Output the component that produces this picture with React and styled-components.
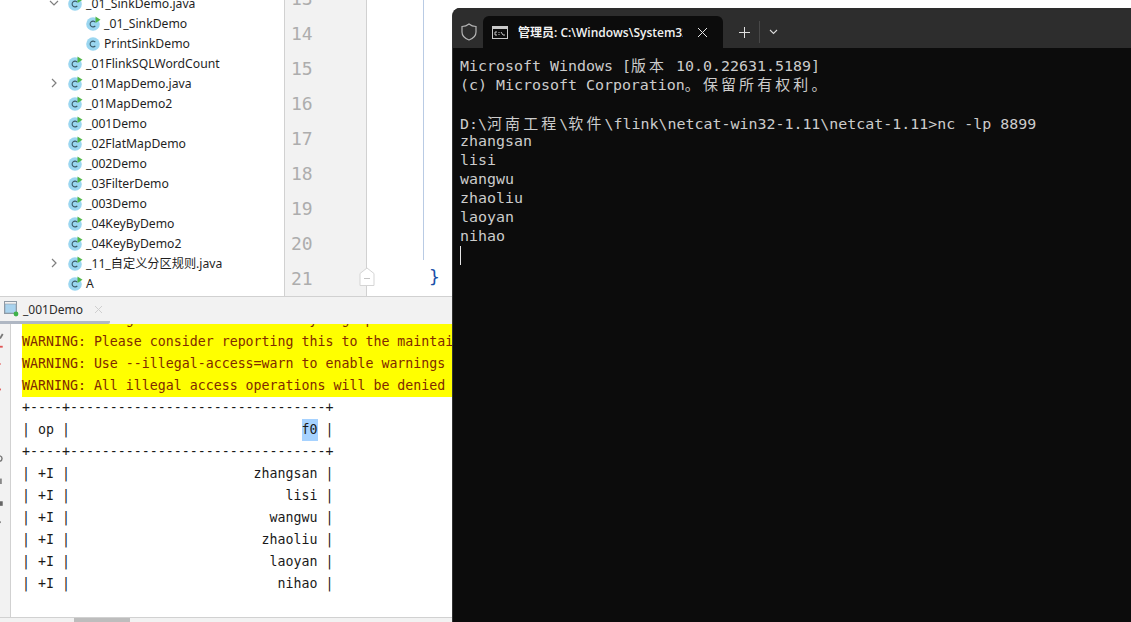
import React from "react";
import styled, { createGlobalStyle } from "styled-components";

const GlobalStyle = createGlobalStyle`
  html, body {
    margin: 0;
    padding: 0;
    background: #fff;
    overflow: hidden;
  }
`;

const Page = styled.div`
  display: flex;
  width: 1131px;
  height: 622px;
  overflow: hidden;
  background: #fff;
`;

const Ide = styled.div`
  width: 452px;
  flex-shrink: 0;
  display: flex;
  flex-direction: column;
  overflow: hidden;
`;

/* ---- top half: project tree + editor ---- */
const TopPane = styled.div`
  height: 296px;
  flex-shrink: 0;
  display: flex;
  overflow: hidden;
`;

const Tree = styled.div`
  width: 284px;
  flex-shrink: 0;
  display: flex;
  flex-direction: column;
  justify-content: flex-end;
  padding-bottom: 3px;
  box-sizing: border-box;
  overflow: hidden;
  font-family: "Noto Sans", "Noto Sans CJK SC", sans-serif;
  font-size: 12.2px;
  color: #1f1f1f;
`;

const TreeRow = styled.div`
  height: 20px;
  flex-shrink: 0;
  display: flex;
  align-items: center;
  padding-left: ${(p) => (p.$nested ? 86 : 68)}px;
  position: relative;
`;

const Chevron = styled.svg`
  position: absolute;
  left: 49px;
  top: 5px;
`;

const TreeLabel = styled.span`
  margin-left: 3px;
  white-space: pre;
`;

const Gutter = styled.div`
  width: 83px;
  flex-shrink: 0;
  box-sizing: border-box;
  background: #f2f2f2;
  border-left: 1px solid #d1d1d1;
  border-right: 1px solid #d1d1d1;
  display: flex;
  flex-direction: column;
  justify-content: flex-end;
  overflow: hidden;
`;

const LineNo = styled.div`
  height: 35px;
  flex-shrink: 0;
  line-height: 35px;
  padding-left: 6px;
  font-family: "DejaVu Sans Mono", monospace;
  font-size: 18px;
  color: #adadad;
`;

const FoldMark = styled.svg`
  position: absolute;
  left: -8px;
  bottom: 9px;
`;

const Editor = styled.div`
  flex: 1;
  display: flex;
  position: relative;
`;

const IndentGuide = styled.div`
  width: 1px;
  height: 260px;
  margin-left: 56px;
  background: #b9cbe4;
`;

const Brace = styled.div`
  margin: 259px 0 0 5px;
  font-family: "DejaVu Sans Mono", monospace;
  font-size: 18px;
  line-height: 35px;
  color: #1a4fa8;
`;

/* ---- bottom half: run console ---- */
const BottomPane = styled.div`
  flex: 1;
  display: flex;
  flex-direction: column;
  min-height: 0;
  border-top: 1px solid #d1d1d1;
`;

const TabBar = styled.div`
  height: 27px;
  flex-shrink: 0;
  background: #f2f2f2;
  display: flex;
`;

const RunTab = styled.div`
  width: 110px;
  box-sizing: border-box;
  display: flex;
  align-items: center;
  padding-left: 4px;
  gap: 4px;
  border-bottom: 3px solid #afb7c3;
  border-radius: 0 0 2px 0;
  font-family: "Noto Sans", sans-serif;
  font-size: 12px;
  color: #2b2b2b;
`;

const TabClose = styled.svg`
  margin-left: 7px;
`;

const ConsoleWrap = styled.div`
  flex: 1;
  display: flex;
  min-height: 0;
`;

const ToolStrip = styled.svg`
  width: 11px;
  flex-shrink: 0;
  height: 100%;
  background: #f2f2f2;
  border-right: 1px solid #d1d1d1;
  box-sizing: border-box;
`;

const ConsoleText = styled.div`
  flex: 1;
  min-width: 0;
  padding: 0 0 22px 11px;
  display: flex;
  flex-direction: column;
  justify-content: flex-end;
  overflow: hidden;
  font-family: "DejaVu Sans Mono", monospace;
  font-size: 13.28px;
  line-height: 22px;
  color: #1a1a1a;
`;

const ConsoleLine = styled.div`
  height: 22px;
  flex-shrink: 0;
  white-space: pre;
  ${(p) => p.$warn && "background: #ffff00; color: #7f2a00;"}
`;

const Selected = styled.span`
  background: #a6d2ff;
  display: inline-block;
`;

const ScrollTrack = styled.div`
  height: 5px;
  box-sizing: border-box;
  flex-shrink: 0;
  background: #f2f2f2;
  border-top: 1px solid #d1d1d1;
  padding-left: 74px;
`;

const ScrollThumb = styled.div`
  width: 56px;
  height: 100%;
  background: #bdbdbd;
`;

/* ---- terminal window ---- */
const TerminalArea = styled.div`
  flex: 1;
  min-width: 0;
  padding-top: 8px;
  display: flex;
`;

const Terminal = styled.div`
  flex: 1;
  min-width: 0;
  display: flex;
  flex-direction: column;
  background: #0c0c0c;
  border-left: 1px solid #333;
  border-radius: 8px 0 0 0;
  overflow: hidden;
`;

const TitleBar = styled.div`
  height: 40px;
  flex-shrink: 0;
  background: #2d2d2d;
  display: flex;
  align-items: flex-end;
  padding-left: 8px;
`;

const Shield = styled.svg`
  margin-bottom: 7px;
`;

const TermTab = styled.div`
  width: 240px;
  height: 32px;
  margin-left: 6px;
  box-sizing: border-box;
  background: #0c0c0c;
  border-radius: 6px 6px 0 0;
  display: flex;
  align-items: center;
  padding: 0 15px 0 9px;
  color: #f2f2f2;
`;

const TermTabTitle = styled.span`
  width: 165px;
  margin-left: 10px;
  overflow: hidden;
  white-space: nowrap;
  font-family: "Open Sans", "Noto Sans CJK SC", sans-serif;
  font-size: 12px;
  font-weight: 600;
`;

const TermCloseIcon = styled.svg`
  margin-left: auto;
`;

const TitleActions = styled.div`
  height: 32px;
  display: flex;
  align-items: center;
  padding-left: 16px;
`;

const TitleDivider = styled.div`
  width: 1px;
  height: 22px;
  margin: 0 9px;
  background: #484848;
`;

const TermBody = styled.div`
  flex: 1;
  padding: 7.3px 0 0 7px;
  font-family: "DejaVu Sans Mono", "Noto Sans CJK SC", monospace;
  font-size: 14.95px;
  line-height: 19.1px;
  color: #cccccc;
`;

const TermLine = styled.div`
  height: 19.1px;
  white-space: pre;
`;

const Wide = styled.span`
  font-family: "Noto Sans CJK SC", sans-serif;
  letter-spacing: 3.15px;
`;

const Cursor = styled.div`
  width: 1px;
  height: 19px;
  background: #e6e6e6;
`;

const ClassIcon = ({ run = true }) => (
  <svg width="15" height="15" viewBox="0 0 15 15">
    <circle cx="7" cy="8" r="6.8" fill="#9ad6f0" />
    <path d="M9.3 6.2A2.9 2.9 0 1 0 9.3 9.8" fill="none" stroke="#3a5a68" strokeWidth="1.1" />
    {run && <path d="M9.5 0.5L14.5 3.8L9.5 7Z" fill="#4fb548" />}
  </svg>
);

const treeItems = [
  { label: "_01_SinkDemo.java", run: true, open: true },
  { label: "_01_SinkDemo", run: true, nested: true },
  { label: "PrintSinkDemo", run: false, nested: true },
  { label: "_01FlinkSQLWordCount", run: true },
  { label: "_01MapDemo.java", run: true, closed: true },
  { label: "_01MapDemo2", run: true },
  { label: "_001Demo", run: true },
  { label: "_02FlatMapDemo", run: true },
  { label: "_002Demo", run: true },
  { label: "_03FilterDemo", run: true },
  { label: "_003Demo", run: true },
  { label: "_04KeyByDemo", run: true },
  { label: "_04KeyByDemo2", run: true },
  { label: "_11_自定义分区规则.java", run: true, closed: true },
  { label: "A", run: true },
];

const lineNumbers = [13, 14, 15, 16, 17, 18, 19, 20, 21];

const names = ["zhangsan", "lisi", "wangwu", "zhaoliu", "laoyan", "nihao"];
const divider = "+----+" + "-".repeat(32) + "+";

const warnings = [
  "WARNING: Illegal reflective access by org.apache.flink.api.java.ClosureCleaner",
  "WARNING: Please consider reporting this to the maintainers of org.apache.flink",
  "WARNING: Use --illegal-access=warn to enable warnings of further illegal",
  "WARNING: All illegal access operations will be denied in a future release",
];

export default function App() {
  return (
    <Page>
      <GlobalStyle />
      <Ide>
        <TopPane>
          <Tree>
            {treeItems.map((item) => (
              <TreeRow key={item.label} $nested={item.nested}>
                {item.open && (
                  <Chevron width="10" height="10" viewBox="0 0 10 10">
                    <path d="M1 3L5 7L9 3" fill="none" stroke="#7f7f7f" strokeWidth="1.2" />
                  </Chevron>
                )}
                {item.closed && (
                  <Chevron width="10" height="10" viewBox="0 0 10 10">
                    <path d="M3 1L7 5L3 9" fill="none" stroke="#7f7f7f" strokeWidth="1.2" />
                  </Chevron>
                )}
                <ClassIcon run={item.run} />
                <TreeLabel>{item.label}</TreeLabel>
              </TreeRow>
            ))}
          </Tree>
          <Gutter>
            {lineNumbers.map((n) => (
              <LineNo key={n}>{n}</LineNo>
            ))}
          </Gutter>
          <Editor>
            <FoldMark width="16" height="20" viewBox="0 0 16 20">
              <path d="M1 6.5L8 1L15 6.5V18.5H1Z" fill="#fff" stroke="#d5d5d5" />
              <path d="M5 11.5H11" stroke="#c4c4c4" />
            </FoldMark>
            <IndentGuide />
            <Brace>{"}"}</Brace>
          </Editor>
        </TopPane>
        <BottomPane>
          <TabBar>
            <RunTab>
              <svg width="15" height="16" viewBox="0 0 15 16">
                <rect x="0.5" y="0.5" width="12" height="12" fill="#f2f2f2" stroke="#8f9aa5" />
                <rect x="1" y="3" width="11" height="9" fill="#a9d3ee" stroke="#8f9aa5" strokeWidth="0.6" />
                <circle cx="12" cy="13" r="2.4" fill="#3fb24a" />
              </svg>
              _001Demo
              <TabClose width="9" height="9" viewBox="0 0 9 9">
                <path d="M1 1L8 8M8 1L1 8" stroke="#cfcfcf" />
              </TabClose>
            </RunTab>
          </TabBar>
          <ConsoleWrap>
            <ToolStrip viewBox="0 0 11 293" preserveAspectRatio="xMinYMin">
              <path d="M0 16L3 11" stroke="#777" strokeWidth="2" />
              <rect x="0" y="24" width="3" height="2" fill="#e05555" />
              <rect x="0" y="43" width="1" height="2" fill="#e89090" />
              <rect x="0" y="71" width="1" height="2" fill="#e05555" />
              <path d="M0 145C3 146 3 150 0 151" fill="none" stroke="#777" strokeWidth="1.6" />
              <rect x="0" y="170" width="2" height="6" fill="#888" />
              <rect x="0" y="195" width="3" height="5" fill="#666" />
              <rect x="0" y="217" width="1" height="2" fill="#888" />
            </ToolStrip>
            <ConsoleText>
              {warnings.map((w) => (
                <ConsoleLine key={w} $warn>{w}</ConsoleLine>
              ))}
              <ConsoleLine>{divider}</ConsoleLine>
              <ConsoleLine>
                {"| op |" + " ".repeat(29)}
                <Selected>f0</Selected>
                {" |"}
              </ConsoleLine>
              <ConsoleLine>{divider}</ConsoleLine>
              {names.map((name) => (
                <ConsoleLine key={name}>{"| +I |" + name.padStart(31) + " |"}</ConsoleLine>
              ))}
            </ConsoleText>
          </ConsoleWrap>
          <ScrollTrack>
            <ScrollThumb />
          </ScrollTrack>
        </BottomPane>
      </Ide>
      <TerminalArea>
        <Terminal>
          <TitleBar>
            <Shield width="16" height="18" viewBox="0 0 16 18">
              <path d="M8 1C10 2.6 12.5 3.4 15 3.5V9C15 13 11.5 15.8 8 17C4.5 15.8 1 13 1 9V3.5C3.5 3.4 6 2.6 8 1Z" fill="none" stroke="#b5b5b5" strokeWidth="1.2" />
            </Shield>
            <TermTab>
              <svg width="16" height="13" viewBox="0 0 16 13">
                <rect x="0.5" y="0.5" width="15" height="12" fill="#0c0c0c" stroke="#c8c8c8" />
                <rect x="1" y="1" width="14" height="2" fill="#c8c8c8" />
                <path d="M3 6H5M3 6V9H5M7 6V7M7 8V9M9 6L11 9H13" fill="none" stroke="#d8d8d8" strokeWidth="0.9" />
              </svg>
              <TermTabTitle>管理员: C:\Windows\System32\cmd.exe</TermTabTitle>
              <TermCloseIcon width="11" height="11" viewBox="0 0 11 11">
                <path d="M1 1L10 10M10 1L1 10" stroke="#e6e6e6" strokeWidth="1" />
              </TermCloseIcon>
            </TermTab>
            <TitleActions>
              <svg width="11" height="11" viewBox="0 0 11 11">
                <path d="M5.5 0V11M0 5.5H11" stroke="#e0e0e0" strokeWidth="1" />
              </svg>
              <TitleDivider />
              <svg width="9" height="6" viewBox="0 0 9 6">
                <path d="M1 1L4.5 4.5L8 1" fill="none" stroke="#d8d8d8" strokeWidth="1.1" />
              </svg>
            </TitleActions>
          </TitleBar>
          <TermBody>
            <TermLine>Microsoft Windows [<Wide>版本</Wide> 10.0.22631.5189]</TermLine>
            <TermLine>(c) Microsoft Corporation<Wide>。保留所有权利。</Wide></TermLine>
            <TermLine />
            <TermLine>D:\<Wide>河南工程</Wide>\<Wide>软件</Wide>\flink\netcat-win32-1.11\netcat-1.11&gt;nc -lp 8899</TermLine>
            {names.map((name) => (
              <TermLine key={name}>{name}</TermLine>
            ))}
            <Cursor />
          </TermBody>
        </Terminal>
      </TerminalArea>
    </Page>
  );
}
